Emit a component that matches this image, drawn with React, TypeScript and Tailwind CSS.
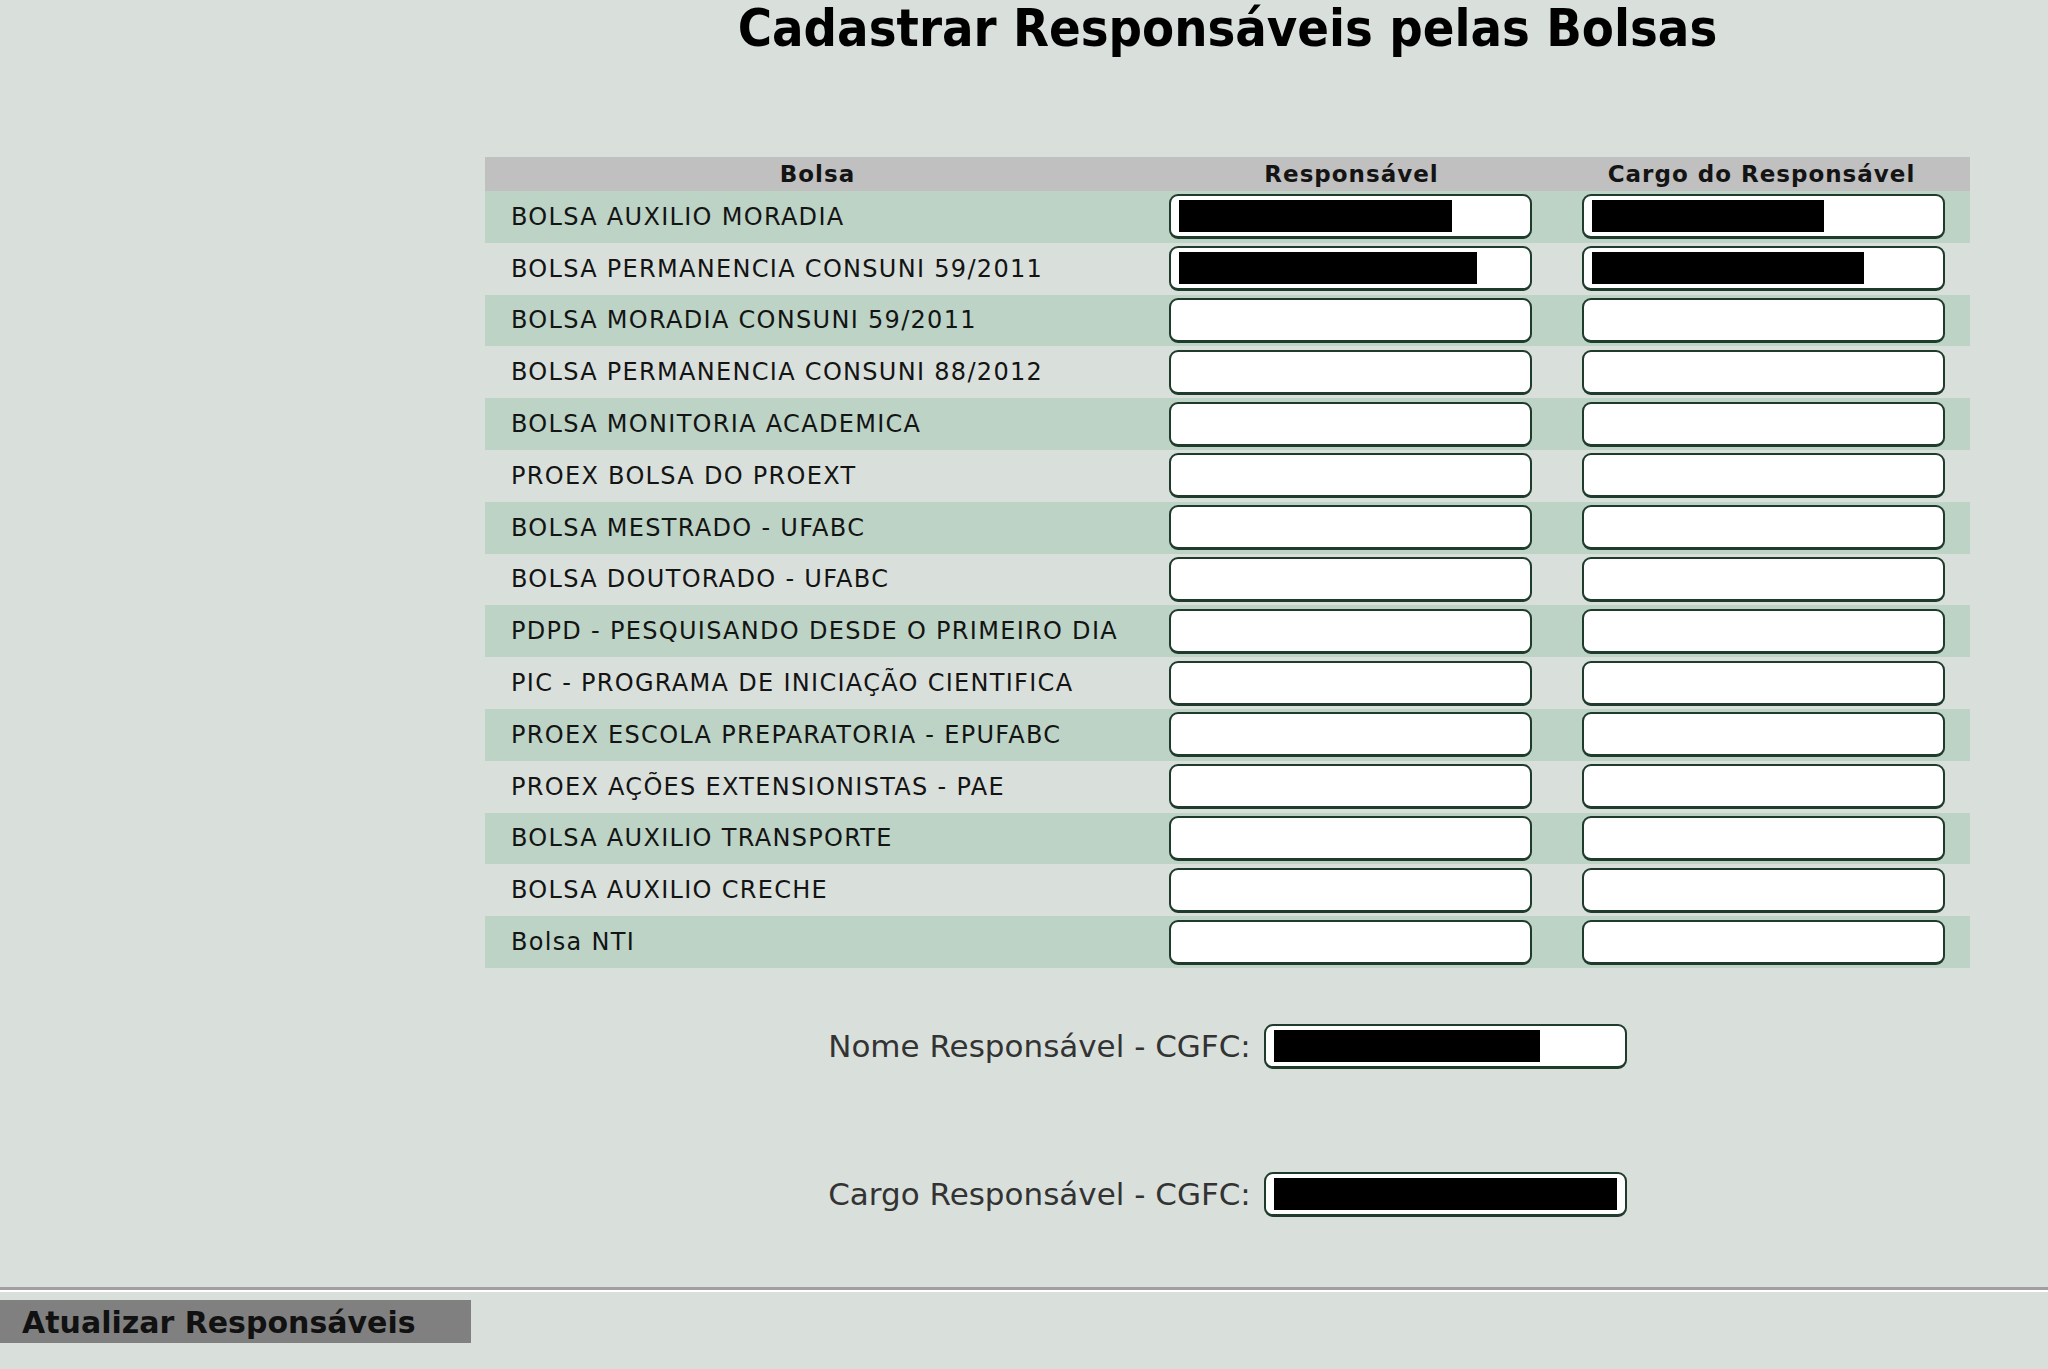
import React from "react";

type Bolsa = {
  nome: string;
  responsavel?: number;
  cargo?: number;
};

const bolsas: Bolsa[] = [
  { nome: "BOLSA AUXILIO MORADIA", responsavel: 273, cargo: 232 },
  { nome: "BOLSA PERMANENCIA CONSUNI 59/2011", responsavel: 298, cargo: 272 },
  { nome: "BOLSA MORADIA CONSUNI 59/2011" },
  { nome: "BOLSA PERMANENCIA CONSUNI 88/2012" },
  { nome: "BOLSA MONITORIA ACADEMICA" },
  { nome: "PROEX BOLSA DO PROEXT" },
  { nome: "BOLSA MESTRADO - UFABC" },
  { nome: "BOLSA DOUTORADO - UFABC" },
  { nome: "PDPD - PESQUISANDO DESDE O PRIMEIRO DIA" },
  { nome: "PIC - PROGRAMA DE INICIAÇÃO CIENTIFICA" },
  { nome: "PROEX ESCOLA PREPARATORIA - EPUFABC" },
  { nome: "PROEX AÇÕES EXTENSIONISTAS - PAE" },
  { nome: "BOLSA AUXILIO TRANSPORTE" },
  { nome: "BOLSA AUXILIO CRECHE" },
  { nome: "Bolsa NTI" },
];

// redacted value = black bar inside the field
function Campo({ redacted }: { redacted?: number }) {
  return (
    <div className="flex h-[45px] w-[363px] items-center overflow-hidden rounded-[9px] border-2 border-b-[3px] border-[#1e3b2c] bg-white px-2">
      {redacted ? <div className="h-[32px] bg-black" style={{ width: redacted }} /> : null}
    </div>
  );
}

export default function App() {
  return (
    <div className="flex min-h-[1369px] flex-col bg-[#d9e0dc] font-['DejaVu_Sans',sans-serif] text-[#141414]">
      <div className="flex">
        <div className="w-[485px] shrink-0" />
        <div className="flex w-[1485px] flex-col">
          <h1 className="pt-[4px] text-center text-[52px] leading-[48px] font-bold font-stretch-condensed text-black">
            Cadastrar Responsáveis pelas Bolsas
          </h1>

          <div className="mt-[105px]">
            <div className="grid h-[34px] grid-cols-[665px_403px_417px] items-center bg-[#c0c0c0] text-[23px] font-bold tracking-[1px]">
              <div className="text-center">Bolsa</div>
              <div className="text-center">Responsável</div>
              <div className="text-center">Cargo do Responsável</div>
            </div>
            {bolsas.map((b, i) => (
              <div
                key={b.nome}
                className={`grid h-[51.8px] grid-cols-[665px_403px_417px] items-center ${i % 2 === 0 ? "bg-[#bcd3c6]" : "bg-[#d9e0dc]"}`}
              >
                <div className="pl-[26px] text-[24px] tracking-[1.3px]">{b.nome}</div>
                <div className="pl-[19px]">
                  <Campo redacted={b.responsavel} />
                </div>
                <div className="pl-[29px]">
                  <Campo redacted={b.cargo} />
                </div>
              </div>
            ))}
          </div>

          <div className="mt-[55px] flex items-center justify-center gap-[13px]">
            <span className="text-[31px] text-[#333]">Nome Responsável - CGFC:</span>
            <Campo redacted={266} />
          </div>
          <div className="mt-[102px] flex items-center justify-center gap-[13px]">
            <span className="text-[31px] text-[#333]">Cargo Responsável - CGFC:</span>
            <Campo redacted={350} />
          </div>
        </div>
      </div>

      <div className="mt-[69px] border-t-[3px] border-b-2 border-t-[#a0a0a0] border-b-white" />
      <div className="mt-[8px] flex">
        <button
          type="button"
          className="h-[43px] w-[471px] bg-[#808080] pl-[22px] text-left text-[30px] font-bold text-[#111]"
        >
          Atualizar Responsáveis
        </button>
      </div>
    </div>
  );
}
